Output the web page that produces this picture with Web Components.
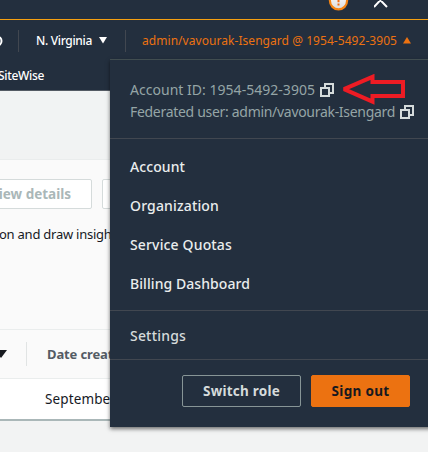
<!DOCTYPE html>
<html lang="en">
<head>
<meta charset="utf-8">
<title>Account menu</title>
<style>
html,body{margin:0;width:428px;height:452px;overflow:hidden;background:#f2f3f3;font-family:"Noto Sans","Open Sans",sans-serif}
</style>
</head>
<body>
<console-app></console-app>
<script>
const define = (name, html, ready) => customElements.define(name, class extends HTMLElement {
  connectedCallback() {
    if (this.shadowRoot) return;
    const t = document.createElement('template');
    t.innerHTML = html;
    this.attachShadow({mode: 'open'}).append(t.content.cloneNode(true));
    if (ready) ready(this);
  }
});

/* A single line of text whose tracking is adjusted to fill the given width. */
define('fit-text', `<style>:host{display:block;flex:none;white-space:nowrap;line-height:20px;height:20px}span{display:inline-block}</style><span><slot></slot></span>`, el => {
  const s = el.shadowRoot.querySelector('span');
  const w = +el.getAttribute('w');
  el.style.width = w + 'px';
  const n = el.textContent.length;
  s.style.letterSpacing = ((w - s.getBoundingClientRect().width) / n) + 'px';
});

define('copy-icon', `<style>:host{display:block;flex:none;width:14px;height:14px}svg{display:block}</style>
<svg width="14" height="14" fill="none" stroke="#d5dbdb" stroke-width="2"><path d="M5 4V1h8v9h-3M1 5h8v8H1z"/></svg>`);

define('top-bar', `<style>
:host{display:block;height:19px;border-bottom:1px solid #f5a010;overflow:hidden}
.row{display:flex;padding-left:328px;gap:25px}
svg{display:block}
</style><div class="row">
<svg width="21" height="19"><defs><linearGradient id="g" x2="0" y2="1"><stop stop-color="#fff"/><stop offset="1" stop-color="#dcdcdc"/></linearGradient></defs><circle cx="10.5" cy="0.8" r="8.6" fill="url(#g)" stroke="#f58413" stroke-width="2.2"/><path d="M10.5-3V2.2M10.5 3.6V5.6" stroke="#ef6c13" stroke-width="2"/></svg>
<svg width="14" height="19"><path d="M0-6.5L13 7M12.5-6.5L0 7" stroke="#fff" stroke-width="2" fill="none"/></svg>
</div>`);

define('nav-bar', `<style>
:host{display:block;height:70px;border-bottom:1px solid #545b64;color:#fff;font-size:12px;font-weight:500}
.main{height:40px;display:flex;align-items:center;padding-top:1px;box-sizing:border-box}
.info{width:18px;height:10px;overflow:hidden}
.info svg{display:block}
i{width:1px;height:22px;background:#414750}
.region{margin-left:17px;margin-right:7px}
.user{margin-left:16px;margin-right:6px;color:#ec7211;font-weight:400}
.sub{height:30px;display:flex;align-items:center;margin-left:-2px;padding-top:2px;box-sizing:border-box}
svg{display:block;flex:none}
</style>
<div class="main"><div class="info"><svg width="18" height="10"><circle cx="-3" cy="5" r="4.5" fill="none" stroke="#fff" stroke-width="2"/></svg></div><i></i>
<fit-text class="region" w="56">N. Virginia</fit-text><svg width="8" height="7"><path d="M0 0h8L4 6.5z" fill="#fff"/></svg><i style="margin-left:18px"></i>
<fit-text class="user" w="255">admin/vavourak-Isengard @ 1954-5492-3905</fit-text><svg width="8" height="7"><path d="M0 6.5h8L4 0z" fill="#ec7211"/></svg></div>
<div class="sub"><fit-text w="46">SiteWise</fit-text></div>`);

define('page-content', `<style>
:host{display:block;font-size:13px;color:#16191f}
.blank{height:68px;background:#f1f3f3;border-bottom:1px solid #eaeded}
.panel{height:169px;background:#fafafa;overflow:hidden}
.buttons{display:flex;gap:10px;padding-top:19px}
.b{box-sizing:border-box;height:30px;border:1px solid #d5dbdb;border-radius:2px;background:#fff;display:flex;align-items:center;justify-content:flex-end;padding-right:20px;font-weight:700;color:#aab7b8}
.first{width:102px;margin-left:-10px;font-size:13.5px}.second{width:80px}
.desc{margin:15px 0 0 -1px}
.head{height:48px;border:solid #eaeded;border-width:1px 0;background:#fafafa;display:flex;align-items:center;font-weight:700;color:#545b64}
.head i{width:1px;height:24px;background:#e1e4e4;margin:0 20px 0 19px}
.row{height:40px;background:#fff;border-bottom:2px solid #aab7b8;display:flex;align-items:center;padding-left:45px;font-size:13.5px}
svg{display:block;flex:none}
</style>
<div class="blank"></div>
<div class="panel"><div class="buttons"><div class="b first"><fit-text w="81">View details</fit-text></div><div class="b second"></div></div>
<fit-text class="desc" w="123">on and draw insights</fit-text></div>
<div class="head"><svg width="7" height="8"><path d="M-5 0H7L1 8z" fill="#16191f"/></svg><i></i><fit-text w="82">Date created</fit-text></div>
<div class="row"><fit-text w="71">September</fit-text></div>`);

define('menu-item', `<style>:host{display:flex;align-items:center;height:39px;padding-left:20px}</style><slot></slot>`);
define('menu-button', `<style>
:host{box-sizing:border-box;display:flex;align-items:center;justify-content:center;height:32px;border:1px solid #879596;border-radius:2px;font-weight:700;color:#d5dbdb}
:host([primary]){background:#ec7211;border-color:#ec7211;color:#16191f}
</style><slot></slot>`);

define('account-menu', `<style>
:host{display:block;box-sizing:border-box;width:340px;height:368px;background:#232f3e;border-top:1px solid #414d50;box-shadow:0 2px 4px rgba(0,0,0,.55);font-size:14px;color:#eaeded}
section{box-sizing:border-box;border-bottom:1px solid #414750}
.who{height:79px;padding:19px 0 0 20px;color:#95a5a6}
.line{display:flex;height:22px;align-items:center;gap:5px}
.links{height:172px;padding-top:8px;font-weight:500}
.settings{height:49px;padding-top:5px;color:#d5dbdb;font-weight:500}
.actions{display:flex;gap:10px;padding:15px 0 0 72px;font-size:13.5px}
.b1{width:119px}.b2{width:99px}
.a{position:absolute;left:230px;top:14px}
</style>
<section class="who"><div class="line"><fit-text w="185">Account ID: 1954-5492-3905</fit-text><copy-icon></copy-icon></div><div class="line"><fit-text w="265">Federated user: admin/vavourak-Isengard</fit-text><copy-icon></copy-icon></div></section>
<section class="links"><menu-item><fit-text w="55">Account</fit-text></menu-item><menu-item><fit-text w="89">Organization</fit-text></menu-item><menu-item><fit-text w="102">Service Quotas</fit-text></menu-item><menu-item><fit-text w="120">Billing Dashboard</fit-text></menu-item></section>
<section class="settings"><menu-item><fit-text w="56">Settings</fit-text></menu-item></section>
<div class="actions"><menu-button class="b1"><fit-text w="77">Switch role</fit-text></menu-button><menu-button class="b2" primary><fit-text w="58">Sign out</fit-text></menu-button></div>
<svg class="a" width="66" height="32"><path d="M4 15.2L32.5 2.8V8H63V22H32.5V27.6L4 15.2z" fill="none" stroke="#ed1c24" stroke-width="4" stroke-miterlimit="2"/></svg>`);

define('console-app', `<style>
:host{display:block;position:relative;width:428px;height:452px;overflow:hidden;background:#f2f3f3}
header{background:#232f3e}
account-menu{position:absolute;left:110px;top:59px}
</style><header><top-bar></top-bar><nav-bar></nav-bar></header><page-content></page-content><account-menu></account-menu>`);
</script>
</body>
</html>
